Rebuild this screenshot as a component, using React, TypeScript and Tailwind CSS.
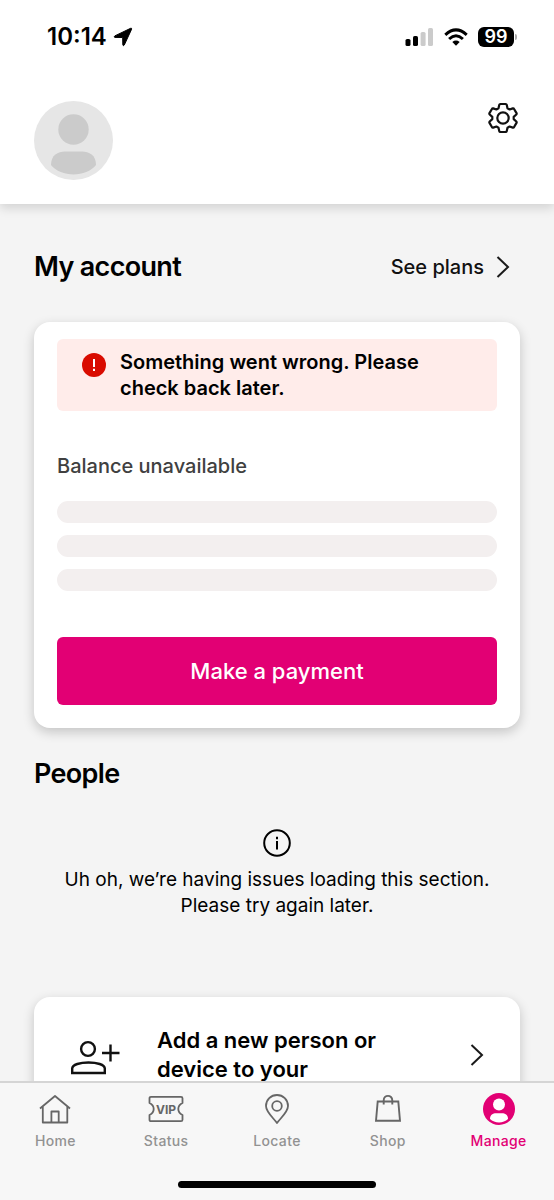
import React from "react";

function Chevron() {
  return (
    <svg viewBox="0 0 14 24" className="h-6 w-3.5 shrink-0" fill="none" stroke="#1a1a1a" strokeWidth="2" aria-hidden="true">
      <path d="M1.5 2 L12 12 L1.5 22" />
    </svg>
  );
}

function StatusBar() {
  return (
    <div className="flex h-[74px] items-center justify-between pr-[37px] pl-[47px]">
      <div className="flex items-center gap-1.5">
        <span className="text-2xl font-semibold text-black">10:14</span>
        <svg viewBox="0 0 20 20" className="h-5 w-5" aria-hidden="true">
          <path
            d="M18.6 2.200 L11.300 18 Q10.300 19.600 9.800 17.800 L9.700 11 Q9.700 10.500 9.200 10.500 L2 10.400 Q.3 9.900 1.800 8.900 L17.600 1.300 Q19 .9 18.600 2.200Z"
            fill="#000"
            stroke="#000"
            strokeLinejoin="round"
          />
        </svg>
      </div>
      <div className="flex items-center gap-2.5">
        <svg viewBox="0 0 29 18" className="h-[18px] w-[29px]" aria-hidden="true">
          <rect x="0.5" y="11" width="5" height="7" rx="1.6" />
          <rect x="8" y="8" width="5" height="10" rx="1.6" />
          <rect x="15.6" y="4" width="5" height="14" rx="1.6" fill="#cbcbcb" />
          <rect x="23" y="0" width="5" height="18" rx="1.6" fill="#cbcbcb" />
        </svg>
        <svg viewBox="0 0 24 18" className="h-[18px] w-6" fill="none" stroke="#000" strokeWidth="3" aria-hidden="true">
          <path d="M1.3 6.8 Q12 -3 22.7 6.8" />
          <path d="M5.1 11 Q12 4.600 18.900 11" />
          <path d="M8.300 13.900 Q12 11 15.700 13.900 L12 17.800Z" fill="#000" stroke="none" />
        </svg>
        <div className="flex items-center gap-px">
          <span className="flex h-5 w-9 items-center justify-center rounded-md bg-black text-lg leading-none font-semibold text-white">99</span>
          <span className="h-1.5 w-0.5 rounded-r-full bg-[#aaaaaa]" />
        </div>
      </div>
    </div>
  );
}

function AvatarIcon() {
  return (
    <svg viewBox="0 0 79 79" className="h-[79px] w-[79px]" role="img" aria-label="Profile">
      <circle cx="39.500" cy="39.500" r="39.500" fill="#e6e6e6" />
      <circle cx="39.500" cy="28.500" r="15.200" fill="#cbcbcb" />
      <path d="M17 64 C17 54 24 50.500 31 50.500 H48 C55 50.500 62 54 62 64 C57 70 48.500 73.500 39.500 73.500 C30.500 73.500 22 70 17 64Z" fill="#cbcbcb" />
    </svg>
  );
}

function GearIcon() {
  return (
    <svg viewBox="-1 -1 34 34" className="h-[34px] w-[34px]" fill="none" stroke="#111" strokeWidth="2.200" strokeLinejoin="round" aria-hidden="true">
      <circle cx="16" cy="16" r="5.700" />
      <path d="M13.300 2 H18.700 Q19.500 2 19.700 2.800 L20.500 6.300 L22.600 7.500 L25.800 6.400 Q26.700 6.200 27.100 7 L29.500 11.100 Q29.900 11.900 29.300 12.500 L26.700 14.900 V17.100 L29.300 19.500 Q29.900 20.100 29.500 20.900 L27.100 25 Q26.700 25.800 25.800 25.600 L22.600 24.500 L20.500 25.700 L19.700 29.200 Q19.500 30 18.700 30 H13.300 Q12.500 30 12.300 29.200 L11.500 25.700 L9.400 24.500 L6.200 25.600 Q5.300 25.800 4.900 25 L2.500 20.900 Q2.100 20.100 2.700 19.500 L5.300 17.100 V14.900 L2.700 12.500 Q2.100 11.900 2.500 11.100 L4.900 7 Q5.300 6.200 6.200 6.400 L9.400 7.500 L11.500 6.300 L12.300 2.800 Q12.500 2 13.300 2Z" />
    </svg>
  );
}

function HomeIcon() {
  return (
    <svg viewBox="0 0 34 34" className="h-[34px] w-[34px]" fill="none" stroke="currentColor" strokeWidth="1.800" strokeLinejoin="round" aria-hidden="true">
      <path d="M2 16.500 L17 4 L32 16.500 M4.800 14.500 V30.500 H29.300 V14.500 M13.400 30.500 V19.500 H20.700 V30.500" />
    </svg>
  );
}

function VipIcon() {
  return (
    <svg viewBox="0 0 36 34" className="h-[34px] w-9" aria-hidden="true">
      <path
        d="M3 4.800 H33 Q34.500 4.800 34.500 6.300 V11 Q30.300 13 30.300 17 Q30.300 21 34.500 23 V27.700 Q34.500 29.200 33 29.200 H3 Q1.500 29.200 1.500 27.700 V23 Q5.700 21 5.700 17 Q5.700 13 1.500 11 V6.300 Q1.500 4.800 3 4.800Z"
        fill="none"
        stroke="currentColor"
        strokeWidth="1.800"
        strokeLinejoin="round"
      />
      <text x="18" y="21.500" textAnchor="middle" fontSize="12" fontWeight="700" fill="currentColor">
        VIP
      </text>
    </svg>
  );
}

function PinIcon() {
  return (
    <svg viewBox="0 0 34 34" className="h-[34px] w-[34px]" fill="none" stroke="currentColor" strokeWidth="1.800" strokeLinejoin="round" aria-hidden="true">
      <path d="M17 31 C13 25.500 6 20 6 14 A11 11 0 0 1 28 14 C28 20 21 25.500 17 31Z" />
      <circle cx="17" cy="14" r="4.800" />
    </svg>
  );
}

function BagIcon() {
  return (
    <svg viewBox="0 0 34 34" className="h-[34px] w-[34px]" fill="none" stroke="currentColor" strokeWidth="1.900" aria-hidden="true">
      <path d="M6.700 9.500 H27.300 L29 28.700 H5Z" />
      <path d="M12.700 12.500 V8.500 C12.700 2.300 21.300 2.300 21.300 8.500 V12.500" />
    </svg>
  );
}

function ManageIcon() {
  return (
    <svg viewBox="0 0 34 34" className="h-[34px] w-[34px]" aria-hidden="true">
      <circle cx="17" cy="17" r="16" fill="currentColor" />
      <circle cx="17" cy="12.500" r="6" fill="#fff" />
      <path d="M8 27 C8 22.500 11 21.200 14 21.200 H20 C23 21.200 26 22.500 26 27 C21.500 31.500 12.500 31.500 8 27Z" fill="#fff" />
    </svg>
  );
}

const tabs = [
  { label: "Home", icon: HomeIcon },
  { label: "Status", icon: VipIcon },
  { label: "Locate", icon: PinIcon },
  { label: "Shop", icon: BagIcon },
  { label: "Manage", icon: ManageIcon, active: true },
];

export default function App() {
  return (
    <div className="flex h-screen flex-col overflow-hidden bg-[#f4f4f4] font-['Inter','Liberation_Sans',sans-serif] text-black">
      <header className="z-10 shrink-0 bg-white shadow-[0_4px_10px_rgba(0,0,0,0.14)]">
        <StatusBar />
        <div className="flex items-start justify-between px-[34px] pt-[27px] pb-6">
          <AvatarIcon />
          <button type="button" aria-label="Settings">
            <GearIcon />
          </button>
        </div>
      </header>

      <main className="min-h-0 flex-1 overflow-hidden px-[34px] pt-[47px]">
        <section>
          <div className="flex h-8 items-center justify-between">
            <h1 className="text-[27px] leading-8 font-semibold tracking-tight">My account</h1>
            <a href="#plans" className="flex items-center gap-3 pr-2.5 text-xl font-medium text-[#111]">
              See plans
              <Chevron />
            </a>
          </div>

          <div className="mt-[39px] rounded-2xl bg-white px-[23px] pt-[17px] pb-[23px] shadow-[0_4px_12px_rgba(0,0,0,0.2)]">
            <div role="alert" className="flex gap-3.5 rounded-md bg-[#ffecea] py-2.5 pr-4 pl-[25px]">
              <svg viewBox="0 0 24 24" className="mt-1 h-6 w-6 shrink-0" aria-hidden="true">
                <circle cx="12" cy="12" r="12" fill="#d90b00" />
                <path d="M12 6 V14 M12 15.800 V18" stroke="#fff" strokeWidth="2" />
              </svg>
              <p className="text-xl leading-[26px] font-semibold">
                Something went wrong. Please
                <br />
                check back later.
              </p>
            </div>
            <h2 className="mt-[42px] text-xl leading-[26px] font-medium text-[#404040]">Balance unavailable</h2>
            <div className="mt-[22px] flex flex-col gap-3">
              <div className="h-[22px] rounded-full bg-[#f3efef]" />
              <div className="h-[22px] rounded-full bg-[#f3efef]" />
              <div className="h-[22px] rounded-full bg-[#f3efef]" />
            </div>
            <button type="button" className="mt-[46px] h-[68px] w-full rounded-md bg-[#e20074] text-[22px] font-medium text-white">
              Make a payment
            </button>
          </div>
        </section>

        <section className="mt-[30px]">
          <h1 className="text-[27px] leading-8 font-semibold tracking-tight">People</h1>
          <div className="mt-[39px] flex flex-col items-center">
            <svg viewBox="0 0 28 28" className="h-7 w-7" fill="none" stroke="#000" strokeWidth="2" aria-hidden="true">
              <circle cx="14" cy="14" r="12.800" />
              <path d="M14 12 V20.500 M14 7.800 V10.200" />
            </svg>
            <p className="mt-2.5 text-center text-[19px] leading-[26px]">
              Uh oh, we’re having issues loading this section.
              <br />
              Please try again later.
            </p>
          </div>
          <a href="#add" className="mt-[78px] flex items-center rounded-2xl bg-white py-[29px] pr-9 pl-9 shadow-[0_4px_12px_rgba(0,0,0,0.2)]">
            <svg viewBox="0 -3 52 36" className="h-9 w-[52px] shrink-0" fill="none" stroke="#111" strokeWidth="2.400" overflow="visible" aria-hidden="true">
              <circle cx="18" cy="9" r="6.900" />
              <path d="M2.200 33 V28.500 C2.200 20.500 34.800 20.500 34.800 28.500 V33Z M40.500 4.500 V21.500 M32 13 H49.500" />
            </svg>
            <span className="ml-[35px] flex-1 text-[22px] leading-[29px] font-semibold">
              Add a new person or
              <br />
              device to your
            </span>
            <Chevron />
          </a>
        </section>
      </main>

      <nav className="z-10 flex h-[119px] shrink-0 flex-col items-center justify-between border-t-2 border-[#d5d5d5] bg-[#f7f7f7] pt-[9px] pb-3">
        <div className="grid w-full grid-cols-5">
          {tabs.map(({ label, icon: Icon, active }) => (
            <a
              key={label}
              href={"#" + label.toLowerCase()}
              aria-current={active ? "page" : undefined}
              className={active ? "flex flex-col items-center gap-[5px] text-[#e20074]" : "flex flex-col items-center gap-[5px] text-[#666]"}
            >
              <Icon />
              <span className={active ? "text-sm font-medium tracking-wide" : "text-sm font-medium tracking-wide text-[#929292]"}>{label}</span>
            </a>
          ))}
        </div>
        <div className="h-[7px] w-[198px] rounded-full bg-black" />
      </nav>
    </div>
  );
}
